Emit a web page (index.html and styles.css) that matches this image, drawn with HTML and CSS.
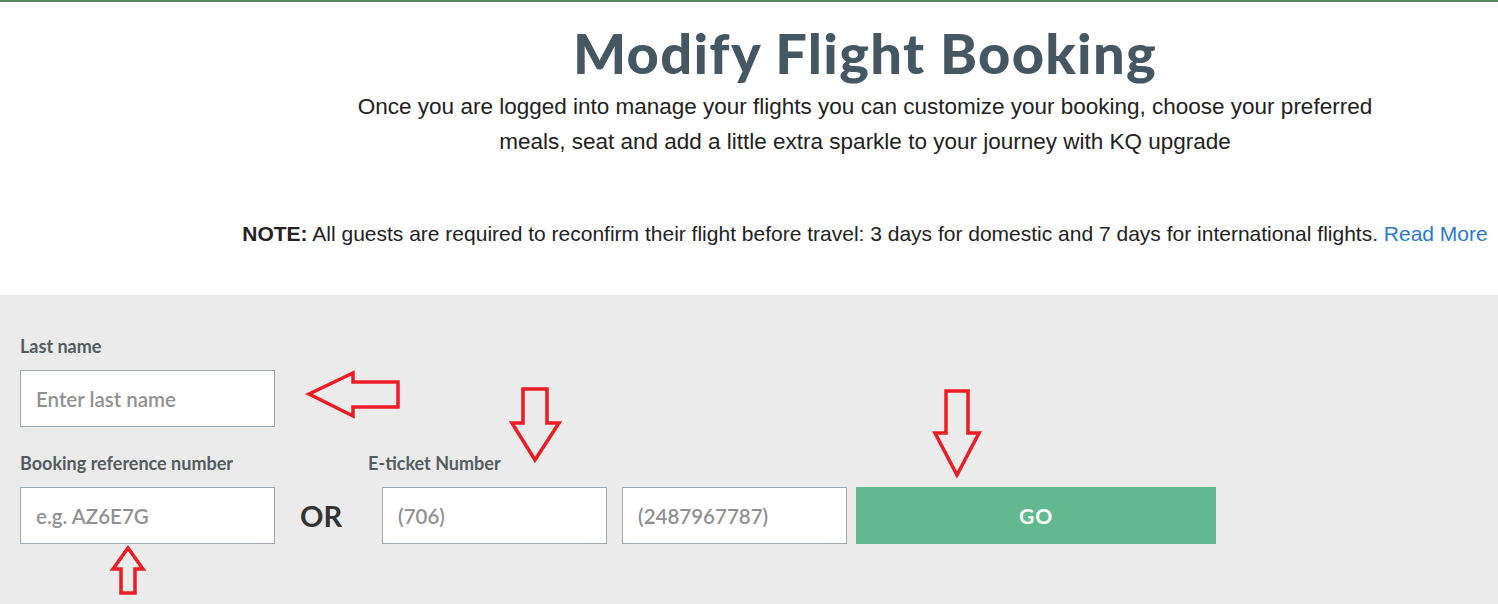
FILE: index.html
```html
<!DOCTYPE html>
<html lang="en">
<head>
<meta charset="utf-8">
<title>Modify Flight Booking</title>
<link rel="stylesheet" href="styles.css">
</head>
<body>
<div class="topbar"></div>
<header class="intro">
  <h1 class="title">Modify Flight Booking</h1>
  <p class="lead">Once you are logged into manage your flights you can customize your booking, choose your preferred<br>meals, seat and add a little extra sparkle to your journey with KQ upgrade</p>
  <p class="note"><strong>NOTE:</strong> All guests are required to reconfirm their flight before travel: 3 days for domestic and 7 days for international flights. <a href="#">Read More</a></p>
</header>
<section class="form">
  <div class="field">
    <label class="label">Last name</label>
    <input class="input" type="text" placeholder="Enter last name">
  </div>
  <div class="row">
    <div class="field">
      <label class="label">Booking reference number</label>
      <input class="input" type="text" placeholder="e.g. AZ6E7G">
    </div>
    <div class="or">OR</div>
    <div class="field eticket">
      <label class="label">E-ticket Number</label>
      <div class="pair">
        <input class="input short" type="text" placeholder="(706)">
        <input class="input short" type="text" placeholder="(2487967787)">
      </div>
    </div>
    <button class="go" type="button">GO</button>
  </div>
</section>
<svg class="marks" width="1498" height="604" viewBox="0 0 1498 604">
  <g fill="none" stroke="#ed1c24" stroke-width="3.5" stroke-linejoin="miter">
    <polygon points="309,394 353,373 353,382 398,382 398,407 353,407 353,416"/>
    <polygon points="523,389 547,389 547,423 559,423 535,460 512,423 523,423"/>
    <polygon points="946,391 968,391 968,433 979,433 957,475 935,433 946,433"/>
    <polygon points="128,548 143,569 135,569 135,593 121,593 121,569 113,569"/>
  </g>
</svg>
</body>
</html>
```

FILE: styles.css
```css
html, body {
  margin: 0;
  padding: 0;
  background: #ebebeb;
}
body {
  position: relative;
  width: 1498px;
  height: 604px;
  overflow: hidden;
  font-family: "Liberation Sans", Arial, sans-serif;
}
.topbar {
  height: 2px;
  background: #5a8a5e;
}
.intro {
  background: #fff;
  height: 293px;
  padding-left: 232px;
  box-sizing: border-box;
  text-align: center;
  padding-top: 19px;
}
.title {
  margin: 0;
  font-family: Lato, sans-serif;
  font-weight: 900;
  font-size: 56px;
  line-height: 64px;
  color: #455762;
  letter-spacing: 1.3px;
}
.lead {
  margin: 4px 0 0;
  font-size: 22.5px;
  line-height: 35px;
  color: #222;
}
.note {
  margin: 62px 0 0;
  font-size: 21px;
  line-height: 26px;
  color: #222;
}
.note strong {
  font-weight: 700;
}
.note a {
  color: #2a78d0;
  text-decoration: none;
}
.form {
  padding: 40px 20px 0;
  font-family: Lato, sans-serif;
}
.field {
  display: flex;
  flex-direction: column;
}
.label {
  font-size: 18px;
  font-weight: 700;
  color: #535c62;
  line-height: 22px;
  margin-bottom: 13px;
}
.input {
  box-sizing: border-box;
  width: 255px;
  height: 57px;
  border: 1px solid #9aabb6;
  background: #fff;
  font-family: Lato, sans-serif;
  font-size: 20.5px;
  font-weight: 600;
  padding: 0 15px;
  outline: none;
}
.input::placeholder {
  color: #919191;
}
.row {
  display: flex;
  align-items: flex-end;
  margin-top: 25px;
}
.or {
  font-size: 29px;
  font-weight: 700;
  color: #333;
  height: 57px;
  line-height: 57px;
  margin: 0 40px 0 25px;
}
.eticket .label {
  margin-left: -14px;
}
.pair {
  display: flex;
  gap: 15px;
}
.short {
  width: 225px;
}
.go {
  margin-left: 9px;
  width: 360px;
  height: 57px;
  border: none;
  background: #62b98f;
  color: #fff;
  font-family: Lato, sans-serif;
  font-weight: 700;
  font-size: 21px;
  letter-spacing: 1px;
}
.marks {
  position: absolute;
  left: 0;
  top: 0;
  pointer-events: none;
}
```
